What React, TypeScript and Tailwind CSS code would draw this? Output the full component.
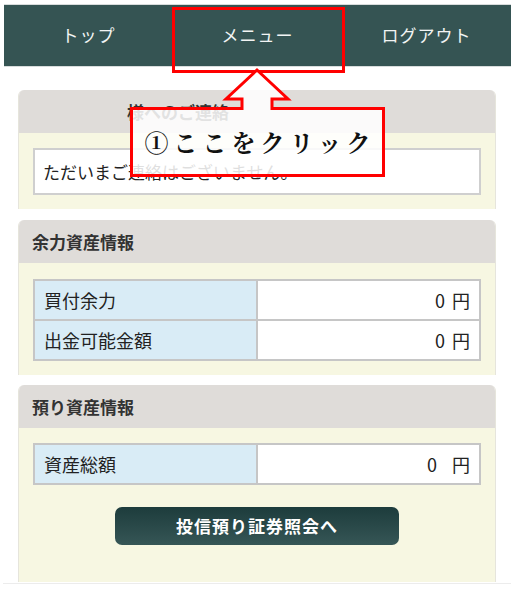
const JP = { fontFamily: '"Noto Sans CJK JP", "Noto Sans", sans-serif' }

function NavBar() {
  const items = ['トップ', 'メニュー', 'ログアウト']
  return (
    <nav className="mt-[4px] ml-[4px] mr-[3px] grid h-[63px] grid-cols-3 border-y border-[#d8dcdc] bg-[#355453]">
      {items.map((label) => (
        <div key={label} className="flex items-center justify-center pb-[2px] text-[17px] tracking-[1px] text-[#f2f4f4]">
          {label}
        </div>
      ))}
    </nav>
  )
}

function Panel({ title, titleClass, children }: { title: string; titleClass?: string; children: React.ReactNode }) {
  return (
    <section className="overflow-hidden rounded-t-[6px] border-x border-[#e6e5dc]">
      <div className={`flex h-[43px] items-center bg-[#dfdcd9] px-[13px] text-[17px] font-bold text-[#333] ${titleClass ?? ''}`}>
        {title}
      </div>
      <div className="bg-[#f7f7e2] px-[14px]">{children}</div>
    </section>
  )
}

type Row = { label: string; value: string; gap: string }

function AmountTable({ rows }: { rows: Row[] }) {
  return (
    <table className="w-full border-collapse border-2 border-[#c6c6c6] text-[18px] text-[#222]">
      <tbody>
        {rows.map((r) => (
          <tr key={r.label} className="h-[40px]">
            <td className="w-[223px] border-2 border-[#c6c6c6] bg-[#d9ecf6] pl-[9px]">{r.label}</td>
            <td className="border-2 border-[#c6c6c6] bg-white pr-[9px] text-right">
              {r.value}
              <span className={r.gap}>円</span>
            </td>
          </tr>
        ))}
      </tbody>
    </table>
  )
}

function Callout() {
  return (
    <div className="pointer-events-none absolute inset-0">
      <div className="absolute left-[172px] top-[3px] h-[66px] w-[173px] border-[3px] border-[#ff0000]" />
      <svg className="absolute left-0 top-0" width="514" height="180" viewBox="0 0 514 180">
        <path
          d="M257 66 L288 95 L272 95 L272 104.5 L383.5 104.5 L383.5 171.5 L131.5 171.5 L131.5 104.5 L242 104.5 L242 95 L226 95 Z"
          fill="rgba(255,255,255,0.86)"
          stroke="#ff0000"
          strokeWidth="3"
        />
      </svg>
      <div
        className="absolute left-[133px] top-[106px] flex h-[64px] w-[249px] items-center justify-center pl-[5px] text-[24px] font-bold tracking-[5px] text-[#111]"
        style={{ fontFamily: '"Noto Serif CJK JP", "Noto Sans CJK JP", serif' }}
      >
        ①ここをクリック
      </div>
    </div>
  )
}

export default function App() {
  return (
    <div className="relative min-h-[599px] w-[514px] bg-white" style={JP}>
      <NavBar />
      <div className="mx-[3px] border-b border-[#ececec] px-[15px] pt-[23px] pb-[1px]">
        <Panel title="様へのご連絡" titleClass="pl-[108px]">
          <div className="pt-[15px] pb-[14px]">
            <div className="flex h-[47px] items-center border-2 border-[#cfcfcf] bg-white px-[8px] text-[17px] text-[#222]">
              ただいまご連絡はございません。
            </div>
          </div>
        </Panel>
        <div className="mt-[11px]">
          <Panel title="余力資産情報">
            <div className="pt-[16px] pb-[14px]">
              <AmountTable
                rows={[
                  { label: '買付余力', value: '0', gap: 'ml-[7px]' },
                  { label: '出金可能金額', value: '0', gap: 'ml-[7px]' },
                ]}
              />
            </div>
          </Panel>
        </div>
        <div className="mt-[10px]">
          <Panel title="預り資産情報">
            <div className="pt-[15px] pb-[37px]">
              <AmountTable rows={[{ label: '資産総額', value: '0', gap: 'ml-[15px]' }]} />
              <div className="mt-[22px] flex justify-center">
                <button className="h-[38px] w-[284px] rounded-[7px] bg-gradient-to-b from-[#1d3c3c] to-[#365656] text-[17px] font-bold tracking-[1px] text-white">
                  投信預り証券照会へ
                </button>
              </div>
            </div>
          </Panel>
        </div>
      </div>
      <Callout />
    </div>
  )
}
